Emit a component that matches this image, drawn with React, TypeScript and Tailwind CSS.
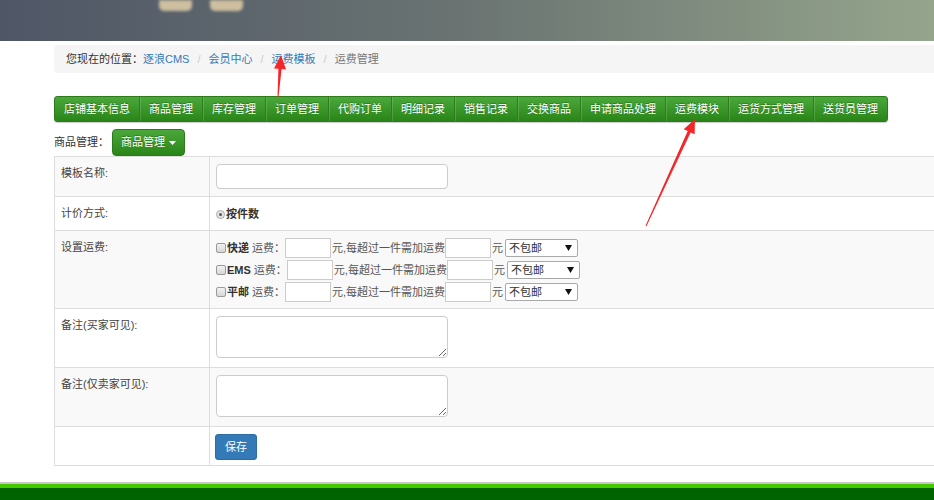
import type { ReactNode } from 'react';

const navItems = [
  '店铺基本信息',
  '商品管理',
  '库存管理',
  '订单管理',
  '代购订单',
  '明细记录',
  '销售记录',
  '交换商品',
  '申请商品处理',
  '运费模块',
  '运货方式管理',
  '送货员管理',
];

const shipping = ['快递', 'EMS', '平邮'];

const font = "font-['Liberation_Sans','Noto_Sans_CJK_SC',sans-serif]";

function Arrow({ x1, y1, x2, y2 }: { x1: number; y1: number; x2: number; y2: number }) {
  // x1,y1 = tail, x2,y2 = tip
  const dx = x2 - x1;
  const dy = y2 - y1;
  const len = Math.hypot(dx, dy);
  const ux = dx / len;
  const uy = dy / len;
  const nx = -uy;
  const ny = ux;
  const head = 14;
  const bx = x2 - ux * head;
  const by = y2 - uy * head;
  const pts = [
    [x1 + nx * 0.5, y1 + ny * 0.5],
    [bx + nx * 1.6, by + ny * 1.6],
    [bx + nx * 6, by + ny * 6],
    [x2, y2],
    [bx - nx * 6, by - ny * 6],
    [bx - nx * 1.6, by - ny * 1.6],
    [x1 - nx * 0.5, y1 - ny * 0.5],
  ]
    .map((p) => p.join(','))
    .join(' ');
  return <polygon points={pts} fill="#f5262a" />;
}

function Row({ label, odd, h, children }: { label: string; odd?: boolean; h: string; children?: ReactNode }) {
  return (
    <div className={`flex border-t border-[#dddddd] first:border-t-0 ${h} ${odd ? 'bg-[#f9f9f9]' : 'bg-white'}`}>
      <div className="w-[155px] shrink-0 border-r border-[#dddddd] px-[6px] pt-[8px] leading-[16px] text-[#444]">
        {label}
      </div>
      <div className="flex-1 pl-[6px] pt-[7px]">{children}</div>
    </div>
  );
}

function Select() {
  return (
    <div className="relative ml-[2px]">
      <select className="appearance-none w-[73px] h-[18px] border border-[#a9a9a9] rounded-[2px] bg-white pl-[3px] text-[11px] leading-[16px] text-[#333] outline-none">
        <option>不包邮</option>
      </select>
      <svg className="absolute right-[6px] top-[6px]" width="7" height="6" viewBox="0 0 7 6">
        <polygon points="0,0 7,0 3.5,6" fill="#111" />
      </svg>
    </div>
  );
}

export default function App() {
  return (
    <div className={`relative w-[934px] h-[500px] overflow-hidden bg-white text-[11px] ${font}`}>
      {/* header */}
      <div className="h-[41px] bg-gradient-to-r from-[#4f5666] via-[#6b7472] to-[#95a58c] flex items-start">
        <div className="ml-[159px] w-[33px] h-[11px] rounded-b-[5px] bg-[#cdbf9f] blur-[1.5px]" />
        <div className="ml-[18px] w-[33px] h-[11px] rounded-b-[5px] bg-[#cdbf9f] blur-[1.5px]" />
      </div>

      <div className="ml-[54px] w-[900px]">
        {/* breadcrumb */}
        <div className="mt-[4px] h-[28px] rounded-[4px] bg-[#f5f5f5] pl-[12px] flex items-center text-[#333]">
          <span>您现在的位置：</span>
          <span className="text-[#337ab7]">逐浪CMS</span>
          <span className="mx-[8px] text-[#cccccc]">/</span>
          <span className="text-[#337ab7]">会员中心</span>
          <span className="mx-[8px] text-[#cccccc]">/</span>
          <span className="text-[#337ab7]">运费模板</span>
          <span className="mx-[8px] text-[#cccccc]">/</span>
          <span className="text-[#777]">运费管理</span>
        </div>

        {/* green nav */}
        <div className="mt-[23px] inline-flex h-[26px] rounded-[3px] border border-[#2c7a19] bg-gradient-to-b from-[#4aa83a] to-[#2a8518] shadow-[0_1px_1px_rgba(0,0,0,0.2)]">
          {navItems.map((item, i) => (
            <div
              key={item}
              className={`flex items-center px-[9px] text-white [text-shadow:0_-1px_0_rgba(0,0,0,0.25)] ${
                i < navItems.length - 1 ? 'border-r border-[#2f7d1e] shadow-[1px_0_0_rgba(255,255,255,0.15)]' : ''
              }`}
            >
              {item}
            </div>
          ))}
        </div>

        {/* dropdown row */}
        <div className="mt-[7px] flex items-center text-[#333]">
          <span>商品管理：</span>
          <button className="ml-[3px] h-[27px] w-[73px] rounded-[4px] border border-[#2c7a19] bg-gradient-to-b from-[#4aa83a] to-[#2a8518] flex items-center justify-center gap-[4px] text-white [text-shadow:0_-1px_0_rgba(0,0,0,0.25)]">
            商品管理
            <svg width="7" height="4" viewBox="0 0 7 4">
              <polygon points="0,0 7,0 3.5,4" fill="#fff" />
            </svg>
          </button>
        </div>

        {/* form table */}
        <div className="border border-[#dddddd] border-r-0">
          <Row label="模板名称:" odd h="h-[39px]">
            <input className="w-[232px] h-[25px] rounded-[4px] border border-[#cccccc] bg-white outline-none" />
          </Row>
          <Row label="计价方式:" h="h-[34px]">
            <div className="flex items-center pt-[2px] text-[#333]">
              <span className="w-[9px] h-[9px] rounded-full border border-[#aaa] bg-[#e6e6e6] flex items-center justify-center">
                <span className="w-[3px] h-[3px] rounded-full bg-[#555]" />
              </span>
              <span className="ml-[1px] font-bold">按件数</span>
            </div>
          </Row>
          <Row label="设置运费:" odd h="h-[78px]">
            <div className="flex flex-col gap-[2px] text-[#555]">
              {shipping.map((s) => (
                <div key={s} className="flex items-center h-[20px]">
                  <span className="w-[10px] h-[10px] rounded-[2px] border border-[#9a9a9a] bg-gradient-to-b from-[#f2f2f2] to-[#d6d6d6]" />
                  <span className="ml-[1px] font-bold text-[#333]">{s}</span>
                  <span className="ml-[3px]">运费：</span>
                  <input className="w-[46px] h-[20px] border border-[#cccccc] bg-white outline-none" />
                  <span className="ml-[1px]">元,每超过一件需加运费</span>
                  <input className="w-[46px] h-[20px] border border-[#cccccc] bg-white outline-none" />
                  <span className="ml-[1px]">元</span>
                  <Select />
                </div>
              ))}
            </div>
          </Row>
          <Row label="备注(买家可见):" h="h-[59px]">
            <textarea className="block w-[232px] h-[42px] rounded-[4px] border border-[#cccccc] bg-white outline-none resize-y" />
          </Row>
          <Row label="备注(仅卖家可见):" odd h="h-[59px]">
            <textarea className="block w-[232px] h-[42px] rounded-[4px] border border-[#cccccc] bg-white outline-none resize-y" />
          </Row>
          <Row label="" h="h-[39px]">
            <button className="-ml-[1px] h-[26px] w-[42px] rounded-[3px] border border-[#2e6da4] bg-[#337ab7] text-white text-[11px]">
              保存
            </button>
          </Row>
        </div>
      </div>

      {/* footer */}
      <div className="mt-[16px] border-t-2 border-[#c8c8c8]">
        <div className="h-[4px] bg-[#44c800]" />
        <div className="h-[20px] bg-[#006400]" />
      </div>

      {/* annotation arrows */}
      <svg className="absolute inset-0 pointer-events-none" width="934" height="500">
        <Arrow x1={278} y1={97} x2={281} y2={55} />
        <Arrow x1={646} y1={226} x2={695} y2={119} />
      </svg>
    </div>
  );
}
